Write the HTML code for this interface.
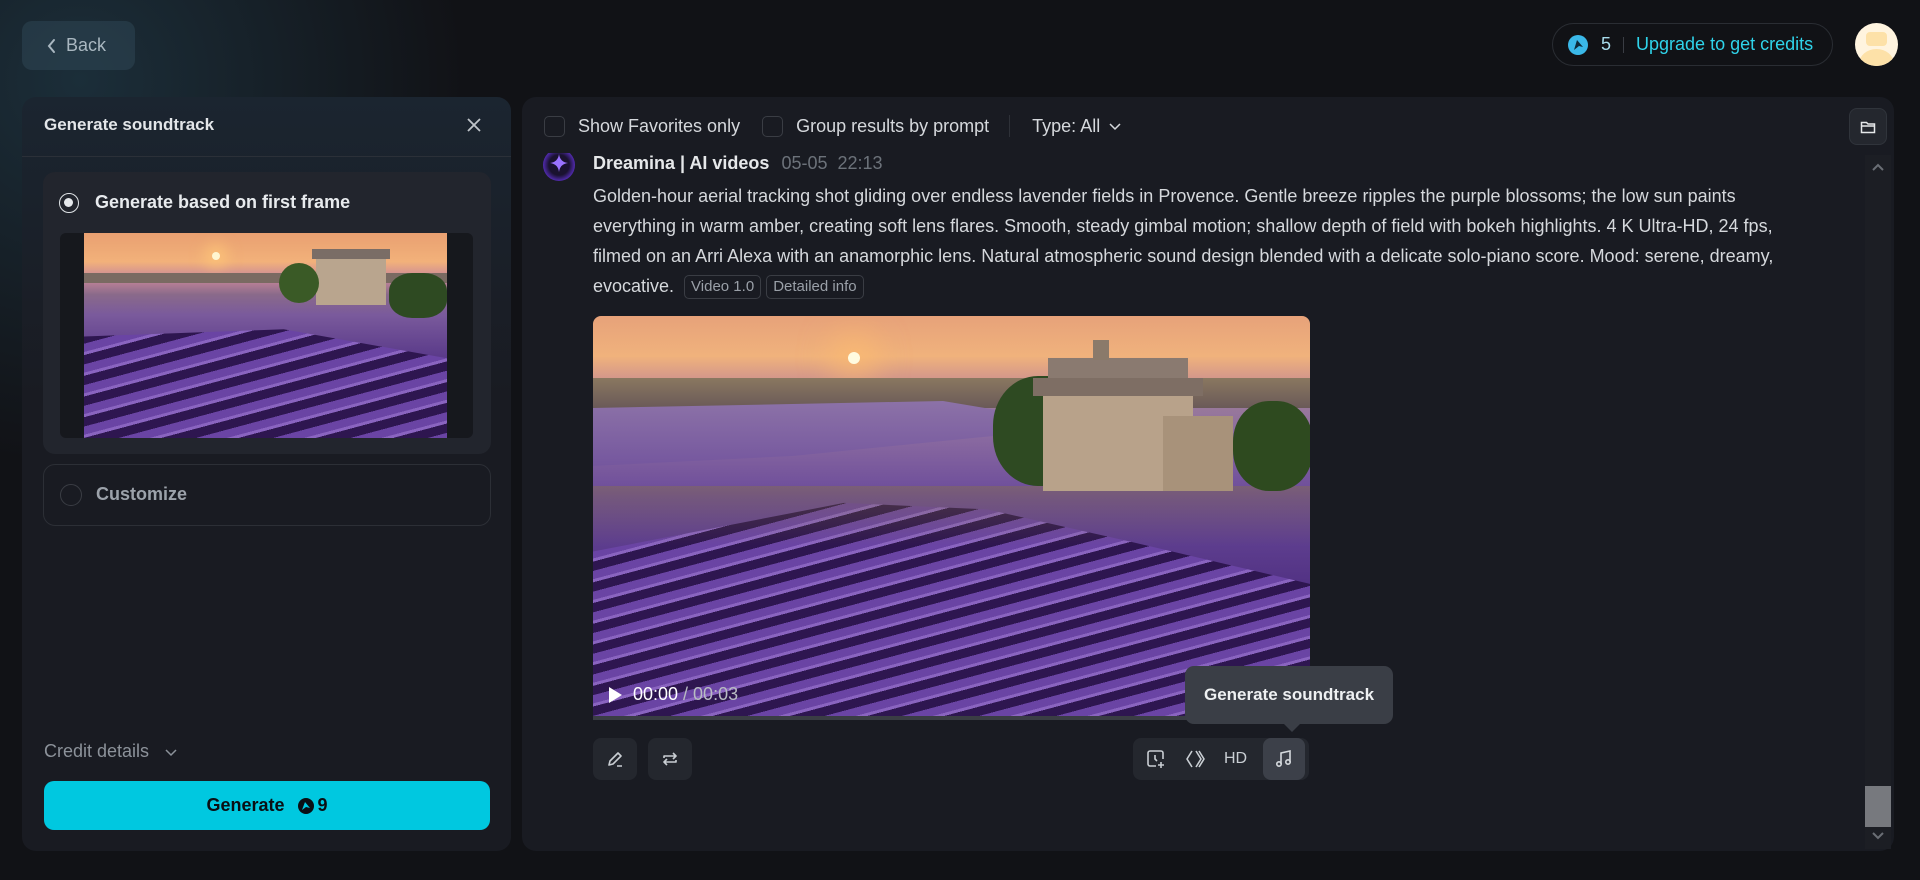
<!DOCTYPE html>
<html><head><meta charset="utf-8"><style>
*{box-sizing:border-box;margin:0;padding:0}
body{width:1920px;height:880px;overflow:hidden;background:#111216;font-family:"Liberation Sans",Arial,sans-serif;color:#e6e8ea;position:relative}
.glow{position:absolute;left:-200px;top:-200px;width:700px;height:700px;background:radial-gradient(circle at 40% 40%,rgba(40,80,100,.45),rgba(17,18,22,0) 65%)}
.abs{position:absolute}
.back{left:22px;top:21px;width:113px;height:49px;border-radius:10px;background:rgba(50,75,90,.45);color:#a9b7c0;font-size:18px;display:flex;align-items:center;padding-left:24px;gap:8px}
.pill{left:1552px;top:23px;width:281px;height:43px;border:1px solid #2a2d33;border-radius:22px;display:flex;align-items:center;padding-left:14px;font-size:18px}
.avatar{left:1855px;top:23px;width:43px;height:43px;border-radius:50%;background:#fff4df;overflow:hidden}
.panel{background:#191b22;border-radius:14px}
.lp{left:22px;top:97px;width:489px;height:754px;background:linear-gradient(180deg,#1b2530 0%,#191b22 40%)}
.rp{left:522px;top:97px;width:1372px;height:754px}
.card{border-radius:12px}
.txt{font-size:18px;line-height:30px;color:#d5d8dc}
.tag{display:inline-block;border:1px solid #3a3d44;border-radius:5px;font-size:15px;line-height:22px;padding:0 6px;color:#9aa0a8;vertical-align:1px}
.btn{background:#24272e;border-radius:8px;display:flex;align-items:center;justify-content:center}
.cb{width:21px;height:21px;border:1px solid #3a3d44;border-radius:5px;display:inline-block}
.rows{background:repeating-linear-gradient(165deg,#2e1650 0 9px,#6a44a4 9px 17px,#8a64c0 17px 20px)}
</style></head><body>
<div class="glow"></div>
<div class="abs back"><svg width="12" height="16" viewBox="0 0 12 16"><path d="M8 2 L3 8 L8 14" stroke="#a9b7c0" stroke-width="2" fill="none" stroke-linecap="round"/></svg>Back</div>

<div class="abs pill"><svg width="22" height="22" viewBox="0 0 22 22"><circle cx="11" cy="11" r="10" fill="#3ab8e8"/><path d="M7 16 L10 6 L16 13 L12 12 Z" fill="#0d2a3a"/></svg><span style="margin-left:12px;color:#a8dcec">5</span><span style="margin:0 12px;width:1px;height:16px;background:#3a3d44"></span><span style="color:#2fd3ea">Upgrade to get credits</span></div>
<div class="abs avatar"><div style="position:absolute;left:11px;top:9px;width:21px;height:14px;background:#fde1a8;border-radius:4px"></div><div style="position:absolute;left:4px;top:26px;width:35px;height:30px;background:#fde1a8;border-radius:50%"></div></div>

<!-- left panel -->
<div class="abs panel lp">
  <div style="position:absolute;left:22px;top:18px;font-size:17px;font-weight:bold;color:#e3e6e9">Generate soundtrack</div>
  <svg style="position:absolute;left:444px;top:20px" width="16" height="16" viewBox="0 0 16 16"><path d="M2 2L14 14M14 2L2 14" stroke="#bfc4c9" stroke-width="1.8"/></svg>
  <div style="position:absolute;left:0;top:59px;width:489px;height:1px;background:#2b3038"></div>
  <div class="card" style="position:absolute;left:21px;top:75px;width:448px;height:282px;background:#22252d">
    <div style="position:absolute;left:16px;top:21px;width:20px;height:20px;border:1.5px solid #dfe3e6;border-radius:50%"><div style="position:absolute;left:4px;top:4px;width:9px;height:9px;background:#e6e9ec;border-radius:50%"></div></div>
    <div style="position:absolute;left:52px;top:20px;font-size:18px;font-weight:bold;color:#e8ebee">Generate based on first frame</div>
    <div style="position:absolute;left:17px;top:61px;width:413px;height:205px;background:#16181d;border-radius:6px;overflow:hidden">
      <div style="position:absolute;left:24px;top:0;width:363px;height:205px;overflow:hidden;background:linear-gradient(180deg,#e9a071 0%,#f2b17a 14%,#c9889a 22%,#8a6a8a 30%,#7a5a9c 40%,#5b3b8a 60%,#4a2a78 100%)">
        <div style="position:absolute;left:128px;top:19px;width:8px;height:8px;border-radius:50%;background:#fff6d0;box-shadow:0 0 14px 8px rgba(255,200,120,.7)"></div>
        <div style="position:absolute;left:0;top:40px;width:363px;height:10px;background:#7a6a62"></div>
        <div class="rows" style="position:absolute;left:0;top:60px;width:363px;height:145px;clip-path:polygon(0 30%,55% 25%,100% 45%,100% 100%,0 100%)"></div>
        <div style="position:absolute;left:232px;top:22px;width:70px;height:50px;background:#b9a58e"></div>
        <div style="position:absolute;left:228px;top:16px;width:78px;height:10px;background:#7a6d66"></div>
        <div style="position:absolute;left:305px;top:40px;width:58px;height:45px;background:#2e4a22;border-radius:40%"></div>
        <div style="position:absolute;left:195px;top:30px;width:40px;height:40px;background:#3a5a26;border-radius:50%"></div>
      </div>
    </div>
  </div>
  <div class="card" style="position:absolute;left:21px;top:367px;width:448px;height:62px;border:1px solid #2c2f36">
    <div style="position:absolute;left:16px;top:19px;width:22px;height:22px;border:1px solid #3a3d44;border-radius:50%"></div>
    <div style="position:absolute;left:52px;top:19px;font-size:18px;font-weight:bold;color:#9ca2aa">Customize</div>
  </div>
  <div style="position:absolute;left:22px;top:644px;font-size:18px;color:#8c929a">Credit details <svg width="14" height="10" viewBox="0 0 14 10" style="margin-left:10px"><path d="M2 3L7 8L12 3" stroke="#8c929a" stroke-width="1.5" fill="none"/></svg></div>
  <div style="position:absolute;left:22px;top:684px;width:446px;height:49px;background:#00c8e0;border-radius:10px;display:flex;align-items:center;justify-content:center;font-size:18px;font-weight:bold;color:#0a0f14">Generate<svg width="18" height="18" viewBox="0 0 18 18" style="margin:0 3px 0 12px"><circle cx="9" cy="9" r="8" fill="#0a0f14"/><path d="M5 13L8 5L13 11L9 10Z" fill="#00c8e0"/></svg>9</div>
</div>

<!-- right panel -->
<div class="abs panel rp">
  <div style="position:absolute;left:22px;top:18px;display:flex;align-items:center;font-size:18px;color:#d5d8dc">
    <span class="cb"></span><span style="margin:0 22px 0 13px">Show Favorites only</span>
    <span class="cb"></span><span style="margin:0 20px 0 13px">Group results by prompt</span>
    <span style="width:1px;height:22px;background:#2e3138;margin-right:22px"></span>
    <span>Type: All</span><svg width="14" height="10" viewBox="0 0 14 10" style="margin-left:8px"><path d="M2 3L7 8L12 3" stroke="#d5d8dc" stroke-width="1.5" fill="none"/></svg>
  </div>
  <div class="btn" style="position:absolute;left:1327px;top:11px;width:38px;height:37px;border:1px solid #30343b"><svg width="16" height="14" viewBox="0 0 16 14"><path d="M1.5 2.5h5l1.5 1.5h6.5v8.5h-13zM1.5 6h13" stroke="#e6e8ea" stroke-width="1.5" fill="none"/></svg></div>
  <div style="position:absolute;left:21px;top:56px;width:32px;height:28px;overflow:hidden"><div style="width:32px;height:32px;margin-top:-4px;border-radius:50%;background:radial-gradient(circle,#1a1230 45%,#5b2fc6 75%)"></div><svg style="position:absolute;left:7px;top:1px" width="18" height="18" viewBox="0 0 18 18"><path d="M9 0 Q10 8 18 9 Q10 10 9 18 Q8 10 0 9 Q8 8 9 0Z" fill="#9a72ff"/></svg></div>
  <div style="position:absolute;left:71px;top:56px;font-size:18px"><b style="color:#e6e8ea">Dreamina | AI videos</b><span style="color:#6c727a;margin-left:12px">05-05&nbsp;&nbsp;22:13</span></div>
  <div class="txt" style="position:absolute;left:71px;top:84px;width:1300px">Golden-hour aerial tracking shot gliding over endless lavender fields in Provence. Gentle breeze ripples the purple blossoms; the low sun paints<br>everything in warm amber, creating soft lens flares. Smooth, steady gimbal motion; shallow depth of field with bokeh highlights. 4 K Ultra-HD, 24 fps,<br>filmed on an Arri Alexa with an anamorphic lens. Natural atmospheric sound design blended with a delicate solo-piano score. Mood: serene, dreamy,<br>evocative. &nbsp;<span class="tag">Video 1.0</span> <span class="tag">Detailed info</span></div>

  <!-- video -->
  <div style="position:absolute;left:71px;top:219px;width:717px;height:404px;border-radius:8px 8px 0 0;overflow:hidden;background:linear-gradient(180deg,#e7a27a 0%,#f0b27c 10%,#d0948c 16%,#9a7a9a 22%,#8a6aa0 30%,#6a4a9a 45%,#4e2e80 70%,#3a1e60 100%)">
    <div style="position:absolute;left:255px;top:36px;width:12px;height:12px;border-radius:50%;background:#fffbe0;box-shadow:0 0 30px 18px rgba(255,190,110,.6)"></div>
    <div style="position:absolute;left:0;top:62px;width:717px;height:30px;background:linear-gradient(180deg,#8a7860,#6a5a58)"></div>
    <div style="position:absolute;left:0;top:80px;width:500px;height:100px;background:linear-gradient(180deg,#8e74a8,#6a4a9a);clip-path:polygon(0 12%,70% 5%,100% 30%,40% 60%,0 70%)"></div>
    <div class="rows" style="position:absolute;left:0;top:80px;width:717px;height:324px;clip-path:polygon(0 48%,35% 33%,55% 35%,75% 45%,100% 58%,100% 100%,0 100%)"></div>
    <div style="position:absolute;left:0;top:170px;width:717px;height:60px;background:linear-gradient(180deg,rgba(140,120,50,.35),rgba(0,0,0,0))"></div>
    <div style="position:absolute;left:400px;top:60px;width:100px;height:110px;background:#2e4a22;border-radius:45%"></div>
    <div style="position:absolute;left:640px;top:85px;width:80px;height:90px;background:#2e4a1f;border-radius:45%"></div>
    <div style="position:absolute;left:450px;top:70px;width:150px;height:105px;background:#b8a28a"></div>
    <div style="position:absolute;left:570px;top:100px;width:70px;height:75px;background:#a8927a"></div>
    <div style="position:absolute;left:440px;top:62px;width:170px;height:18px;background:#7e6e64"></div>
    <div style="position:absolute;left:455px;top:42px;width:140px;height:20px;background:#8a7a70"></div>
    <div style="position:absolute;left:500px;top:24px;width:16px;height:20px;background:#8a7a6a"></div>
    <div style="position:absolute;left:14px;top:368px;display:flex;align-items:center;font-size:18px"><svg width="16" height="18" viewBox="0 0 16 18"><path d="M2 1L15 9L2 17Z" fill="#fff"/></svg><span style="margin-left:10px;color:#fff">00:00</span><span style="color:#b8bcc2">&nbsp;/ 00:03</span></div>
    <div style="position:absolute;left:0;top:400px;width:717px;height:4px;background:#3a3d44"></div>
  </div>

  <div class="btn" style="position:absolute;left:71px;top:641px;width:44px;height:42px"><svg width="20" height="20" viewBox="0 0 20 20"><path d="M4 16L5 12L13 4L16 7L8 15Z M12 17H17" stroke="#c9ced3" stroke-width="1.6" fill="none" stroke-linejoin="round"/></svg></div>
  <div class="btn" style="position:absolute;left:126px;top:641px;width:44px;height:42px"><svg width="20" height="20" viewBox="0 0 20 20"><path d="M4 9V7h12M13 4l3 3-3 3M16 11v2H4M7 16l-3-3 3-3" stroke="#c9ced3" stroke-width="1.6" fill="none" stroke-linejoin="round"/></svg></div>

  <div class="btn" style="position:absolute;left:611px;top:641px;width:176px;height:42px;justify-content:flex-start">
    <svg style="margin-left:12px" width="22" height="22" viewBox="0 0 22 22"><path d="M11 18H5a2 2 0 0 1-2-2V5a2 2 0 0 1 2-2h11a2 2 0 0 1 2 2v6M10 7v4l2 2M16 14v6M13 17h6" stroke="#c9ced3" stroke-width="1.6" fill="none"/></svg>
    <svg style="margin-left:18px" width="22" height="22" viewBox="0 0 22 22"><path d="M7 3L2 11L7 19M11 3L16 11L11 19M14 3L19 11L14 19" stroke="#c9ced3" stroke-width="1.6" fill="none" stroke-linejoin="round"/></svg>
    <span style="margin-left:17px;font-size:16px;color:#c9ced3">HD</span>
    <div style="margin-left:16px;width:42px;height:42px;border-radius:8px;background:#3c4049;display:flex;align-items:center;justify-content:center"><svg width="20" height="20" viewBox="0 0 20 20"><path d="M7 15V4L16 2V13" stroke="#d5d9dd" stroke-width="1.6" fill="none"/><circle cx="5" cy="15" r="2.2" stroke="#d5d9dd" stroke-width="1.6" fill="none"/><circle cx="14" cy="13" r="2.2" stroke="#d5d9dd" stroke-width="1.6" fill="none"/></svg></div>
  </div>

  <div style="position:absolute;left:663px;top:569px;width:208px;height:58px;background:#3a3e46;border-radius:9px;display:flex;align-items:center;justify-content:center;font-size:17px;font-weight:bold;color:#eef0f2">Generate soundtrack</div>
  <div style="position:absolute;left:762px;top:627px;width:0;height:0;border-left:8px solid transparent;border-right:8px solid transparent;border-top:8px solid #3a3e46"></div>

  <div style="position:absolute;left:1343px;top:58px;width:26px;height:694px;background:#1c1e24"></div>
  <svg style="position:absolute;left:1348px;top:64px" width="16" height="12" viewBox="0 0 16 12"><path d="M3 9L8 4L13 9" stroke="#6a6e75" stroke-width="2" fill="none"/></svg>
  <div style="position:absolute;left:1343px;top:689px;width:26px;height:41px;background:#77797e"></div>
  <svg style="position:absolute;left:1348px;top:733px" width="16" height="12" viewBox="0 0 16 12"><path d="M3 3L8 8L13 3" stroke="#6a6e75" stroke-width="2" fill="none"/></svg>
</div>
</body></html>
